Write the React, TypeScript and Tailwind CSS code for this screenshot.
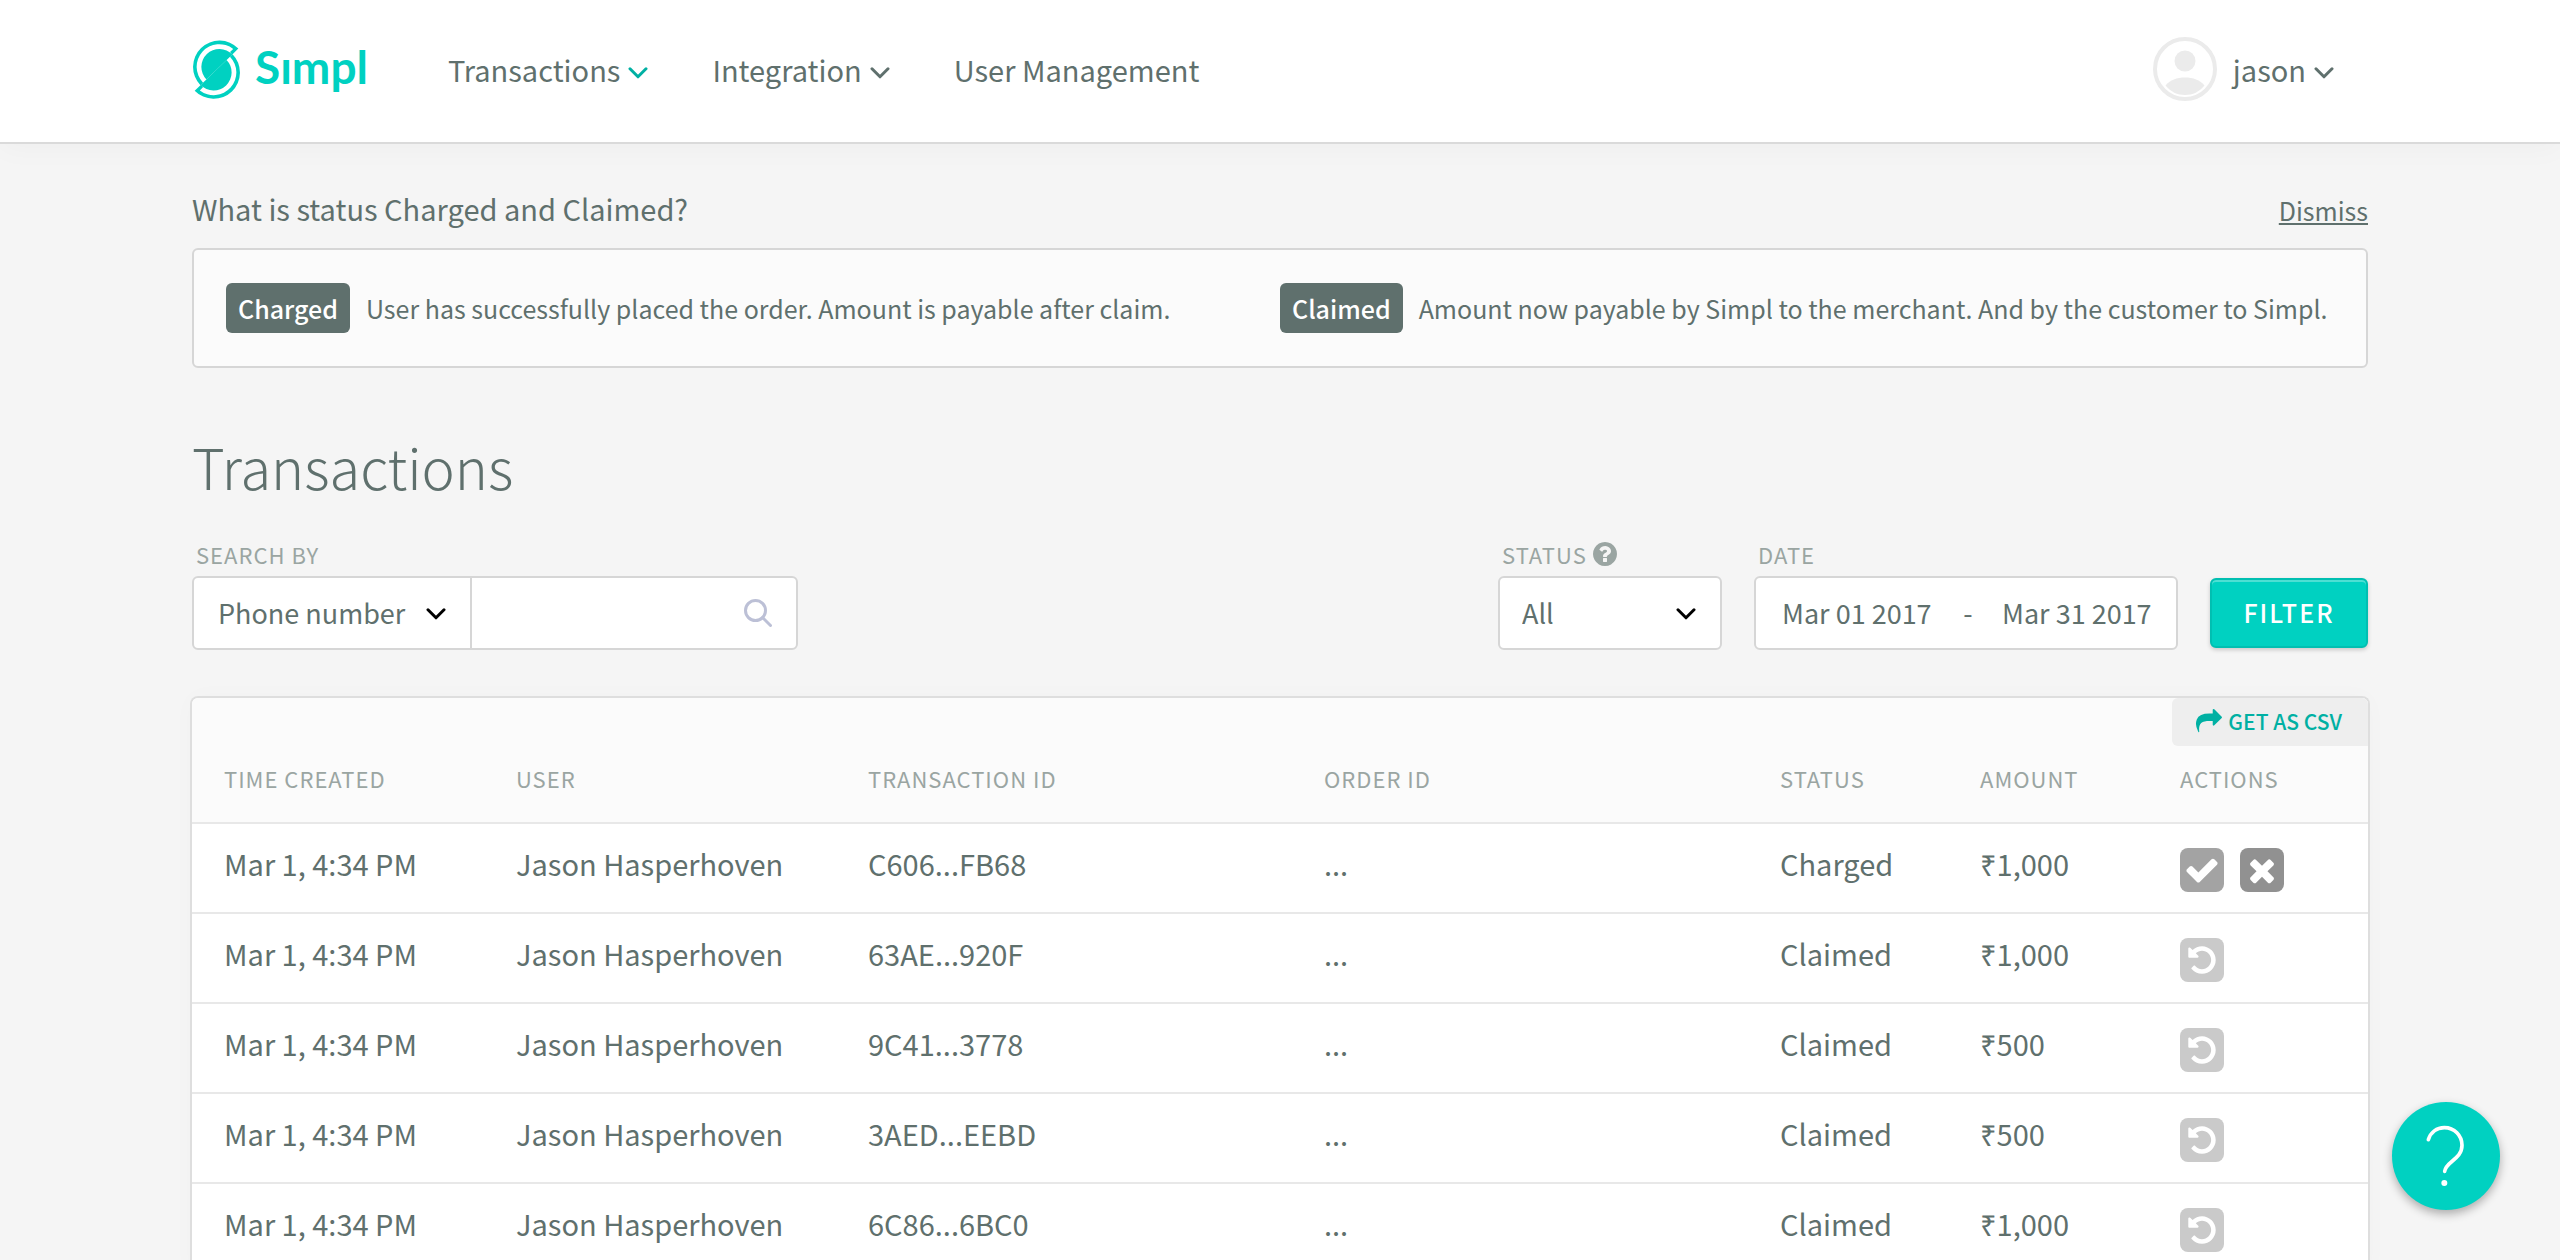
import type { ReactNode } from "react";

const ICONS = {
  check:
    "M1671 566q0 40-28 68l-724 724-136 136q-28 28-68 28t-68-28l-136-136-362-362q-28-28-28-68t28-68l136-136q28-28 68-28t68 28l294 295 656-657q28-28 68-28t68 28l136 136q28 28 28 68z",
  times:
    "M1490 1322q0 40-28 68l-136 136q-28 28-68 28t-68-28l-294-294-294 294q-28 28-68 28t-68-28l-136-136q-28-28-28-68t28-68l294-294-294-294q-28-28-28-68t28-68l136-136q28-28 68-28t68 28l294 294 294-294q28-28 68-28t68 28l136 136q28 28 28 68t-28 68l-294 294 294 294q28 28 28 68z",
  undo: "M1664 896q0 156-61 298t-164 245-245 164-298 61q-172 0-327-72.5t-264-204.5q-7-10-6.5-22.5t8.5-20.5l137-138q10-9 25-9 16 2 23 12 73 95 179 147t225 52q104 0 198.5-40.5t163.5-109.5 109.5-163.5 40.5-198.5-40.5-198.5-109.5-163.5-163.5-109.5-198.5-40.5q-98 0-188 35.5t-160 101.5l137 138q31 30 14 69-17 40-59 40h-448q-26 0-45-19t-19-45v-448q0-42 40-59 39-17 69 14l130 129q107-101 244.5-156.5t284.5-55.5q156 0 298 61t245 164 164 245 61 298z",
  share:
    "M1792 640q0 26-19 45l-512 512q-19 19-45 19t-45-19-19-45v-256h-224q-98 0-175.5 6t-154 21.5-133 42.5-105.5 69.5-80 101-48.5 138.5-17.5 181q0 55 5 123 0 6 2.5 23.5t2.5 26.5q0 15-8.5 25t-23.5 10q-16 0-28-17-7-9-13-22t-13.5-30-10.5-24q-127-285-127-451 0-199 53-333 162-403 875-403h224v-256q0-26 19-45t45-19 45 19l512 512q19 19 19 45z",
  question:
    "M1024 1376v-192q0-14-9-23t-23-9h-192q-14 0-23 9t-9 23v192q0 14 9 23t23 9h192q14 0 23-9t9-23zm256-672q0-88-55.5-163t-138.5-116-170-41q-243 0-371 213-15 24 8 42l132 100q7 6 19 6 16 0 25-12 53-68 86-92 34-24 86-24 48 0 85.5 26t37.5 59q0 38-20 61t-68 45q-63 28-115.5 86.5t-52.5 125.5v36q0 14 9 23t23 9h192q14 0 23-9t9-23q0-19 21.5-49.5t54.5-49.5q32-18 49-28.5t46-35 44.5-48 28-60.5 12.5-81zm384 192q0 209-103 385.5t-279.5 279.5-385.5 103-385.5-103-279.5-279.5-103-385.5 103-385.5 279.5-279.5 385.5-103 385.5 103 279.5 279.5 103 385.5z",
};

function Icon({ name, className }: { name: keyof typeof ICONS; className: string }) {
  return (
    <svg viewBox="0 0 1792 1792" fill="currentColor" aria-hidden="true" className={className}>
      <path d={ICONS[name]} />
    </svg>
  );
}

function Chevron({ className = "" }: { className?: string }) {
  return (
    <svg viewBox="0 0 20 12" aria-hidden="true" className={`h-3 w-5 shrink-0 ${className}`}>
      <path
        d="M2 1.8 L10 9.8 L18 1.8"
        fill="none"
        stroke="currentColor"
        strokeWidth="3"
        strokeLinecap="round"
        strokeLinejoin="round"
      />
    </svg>
  );
}

function LogoMark() {
  const half = "M-42 0 A54 54 0 0 1 66 0 Z M-67 0 A79 79 0 0 1 91 0 H66 V-10 H79.3 A68 68 0 0 0 -56 0 Z";
  return (
    <svg viewBox="38 54 147 183" fill="#00d1c1" aria-hidden="true" className="h-[61px] w-[49px]">
      <g transform="translate(111.5 146) rotate(-44)">
        <path d={half} />
        <path d={half} transform="rotate(180)" />
      </g>
    </svg>
  );
}

function Badge({ children }: { children: ReactNode }) {
  return (
    <span className="rounded-md bg-[#5f706d] px-3 text-[25px] leading-[50px] font-medium text-white">{children}</span>
  );
}

const rows = [
  { id: "C606...FB68", status: "Charged", amount: "₹1,000" },
  { id: "63AE...920F", status: "Claimed", amount: "₹1,000" },
  { id: "9C41...3778", status: "Claimed", amount: "₹500" },
  { id: "3AED...EEBD", status: "Claimed", amount: "₹500" },
  { id: "6C86...6BC0", status: "Claimed", amount: "₹1,000" },
];

const columns = [
  { label: "Time created", width: "w-[292px]" },
  { label: "User", width: "w-[352px]" },
  { label: "Transaction ID", width: "w-[456px]" },
  { label: "Order ID", width: "w-[456px]" },
  { label: "Status", width: "w-[200px]" },
  { label: "Amount", width: "w-[200px]" },
  { label: "Actions", width: "w-[220px]" },
];

function Header() {
  return (
    <header className="relative border-b-2 border-[#dadada] bg-white shadow-[0_4px_28px_rgba(0,0,0,0.03)]">
      <div className="mx-auto flex h-[142px] max-w-[2176px] items-center pb-1 text-[29px] leading-9">
        <a href="#home" aria-label="Simpl" className="flex items-center gap-[14px]">
          <LogoMark />
          <span className="pb-1 font-['Lato',sans-serif] text-[46px] leading-[60px] font-bold text-[#00d1c1]">Sımpl</span>
        </a>
        <nav className="ml-20 flex items-center gap-16">
          <a href="#transactions" className="flex items-center gap-2">
            Transactions
            <Chevron className="mt-2 text-[#00b0a3]" />
          </a>
          <a href="#integration" className="flex items-center gap-2">
            Integration
            <Chevron className="mt-2" />
          </a>
          <a href="#users">User Management</a>
        </nav>
        <button type="button" className="mr-[34px] ml-auto flex items-center gap-4">
          <svg viewBox="0 0 64 64" aria-hidden="true" className="h-16 w-16">
            <circle cx="32" cy="32" r="30" fill="none" stroke="#ebebeb" strokeWidth="4" />
            <circle cx="32" cy="24" r="10.5" fill="#ebebeb" />
            <path d="M12.5 48.5 C17 43 24 40.5 32 40.5 C40 40.5 47 43 51.5 48.5 C46 55 40 58 32 58 C24 58 18 55 12.5 48.5 Z" fill="#ebebeb" />
          </svg>
          <span className="flex items-center gap-2">
            jason
            <Chevron className="mt-2" />
          </span>
        </button>
      </div>
    </header>
  );
}

function Filters() {
  const label = "flex h-8 items-center gap-2 text-[22px] leading-8 tracking-[1px] text-[#9aa5a2] uppercase";
  const box = "flex h-[74px] rounded-md border-2 border-[#d6d6d6] bg-white text-[27px]";
  return (
    <form className="mt-8 flex items-end" onSubmit={(e) => e.preventDefault()}>
      <div>
        <label htmlFor="search-by" className={`${label} mb-1.5 ml-1`}>
          Search by
        </label>
        <div className={box}>
          <div className="grid w-[278px] border-r-2 border-[#d6d6d6]">
            <select id="search-by" className="col-start-1 row-start-1 appearance-none pl-6 outline-none">
              <option>Phone number</option>
            </select>
            <Chevron className="pointer-events-none col-start-1 row-start-1 mt-0.5 mr-6 self-center justify-self-end text-black" />
          </div>
          <div className="flex w-[324px] items-center px-6">
            <input type="text" aria-label="Search" className="min-w-0 flex-1 outline-none" />
            <svg viewBox="0 0 28 28" aria-hidden="true" className="h-7 w-7">
              <g fill="none" stroke="#bcc0d6" strokeWidth="3" strokeLinecap="round">
                <circle cx="11.5" cy="11.5" r="10" />
                <path d="M18.5 18.5 L26.5 26.5" />
              </g>
            </svg>
          </div>
        </div>
      </div>
      <div className="ml-auto">
        <label htmlFor="status" className={`${label} mb-1.5 ml-1`}>
          Status
          <Icon name="question" className="-ml-1 h-7 w-7" />
        </label>
        <div className={box}>
          <div className="grid w-[220px]">
            <select id="status" className="col-start-1 row-start-1 appearance-none pl-[22px] outline-none">
              <option>All</option>
            </select>
            <Chevron className="pointer-events-none col-start-1 row-start-1 mt-0.5 mr-6 self-center justify-self-end text-black" />
          </div>
        </div>
      </div>
      <div className="ml-8">
        <label htmlFor="date-from" className={`${label} mb-1.5 ml-1`}>
          Date
        </label>
        <div className={`${box} w-[424px] items-center justify-between pr-[22px] pl-[26px]`}>
          <input id="date-from" type="text" defaultValue="Mar 01 2017" className="w-[152px] outline-none" />
          <span>-</span>
          <input type="text" aria-label="Date to" defaultValue="Mar 31 2017" className="w-[152px] outline-none" />
        </div>
      </div>
      <button
        type="submit"
        className="mb-0.5 ml-8 h-[70px] w-[158px] rounded-md border-2 border-[#00bfb1] bg-[#00d1c1] pb-0.5 text-[25px] leading-8 font-medium tracking-[2px] text-white uppercase shadow-[inset_0_2px_0_rgba(255,255,255,0.3),0_2px_4px_rgba(0,0,0,0.18)]"
      >
        Filter
      </button>
    </form>
  );
}

function TransactionsTable() {
  return (
    <section className="relative -mx-0.5 mt-[46px] overflow-hidden rounded-t-lg border-2 border-b-0 border-[#dedede] bg-white shadow-[0_0_24px_rgba(0,0,0,0.02)]">
      <button
        type="button"
        className="absolute top-0 right-0 flex h-12 items-center gap-1.5 rounded-l-md bg-[#eeeeee] pr-[26px] pb-0.5 pl-6 text-[21px] leading-8 font-medium text-[#00b0a3] uppercase"
      >
        <Icon name="share" className="h-[26px] w-[26px]" />
        Get as CSV
      </button>
      <table className="w-full table-fixed text-left">
        <thead className="bg-[#fbfbfb] text-[22px] leading-8 text-[#9aa5a2]">
          <tr className="h-[125px] border-b-2 border-[#e8e8e8]">
            {columns.map((c) => (
              <th key={c.label} className={`${c.width} pt-9 pl-8 font-normal tracking-[1px] uppercase`}>
                {c.label}
              </th>
            ))}
          </tr>
        </thead>
        <tbody className="text-[29px] leading-10">
          {rows.map((r) => (
            <tr key={r.id} className="h-[90px] border-b-2 border-[#e8e8e8]">
              <td className="pb-2.5 pl-8">Mar 1, 4:34 PM</td>
              <td className="pb-2.5 pl-8">Jason Hasperhoven</td>
              <td className="pb-2.5 pl-8">{r.id}</td>
              <td className="pb-2.5 pl-8">...</td>
              <td className="pb-2.5 pl-8">{r.status}</td>
              <td className="pb-2.5 pl-8">{r.amount}</td>
              <td className="pt-1 pl-8">
                <div className="flex gap-4 text-white">
                  {r.status === "Charged" ? (
                    <>
                      <button type="button" aria-label="Claim" className="grid h-11 w-11 place-items-center rounded-lg bg-[#a3a3a3]">
                        <Icon name="check" className="h-9 w-9" />
                      </button>
                      <button type="button" aria-label="Cancel" className="grid h-11 w-11 place-items-center rounded-lg bg-[#919191]">
                        <Icon name="times" className="h-9 w-9" />
                      </button>
                    </>
                  ) : (
                    <button type="button" aria-label="Refund" className="grid h-11 w-11 place-items-center rounded-lg bg-[#cacaca]">
                      <Icon name="undo" className="h-8 w-8" />
                    </button>
                  )}
                </div>
              </td>
            </tr>
          ))}
        </tbody>
      </table>
    </section>
  );
}

export default function App() {
  return (
    <div className="h-screen overflow-hidden bg-[#f5f5f5] font-['Noto_Sans_CJK_SC','Noto_Sans',sans-serif] text-[#5f706d]">
      <Header />
      <main className="mx-auto max-w-[2176px] pt-11">
        <div className="mb-4 flex items-start justify-between">
          <h2 className="text-[29px] leading-10">What is status Charged and Claimed?</h2>
          <button type="button" className="text-[25px] leading-[44px] underline decoration-2 underline-offset-2">
            Dismiss
          </button>
        </div>
        <div className="grid h-[120px] grid-cols-2 items-center rounded-md border-2 border-[#d6d6d6] bg-[#fbfbfb] px-8 text-[25px] leading-9">
          <p className="flex items-center gap-4">
            <Badge>Charged</Badge>
            User has successfully placed the order. Amount is payable after claim.
          </p>
          <p className="flex items-center gap-4">
            <Badge>Claimed</Badge>
            Amount now payable by Simpl to the merchant. And by the customer to Simpl.
          </p>
        </div>
        <h1 className="mt-[58px] text-[56px] leading-20 font-light">Transactions</h1>
        <Filters />
        <TransactionsTable />
      </main>
      <button
        type="button"
        aria-label="Help"
        className="fixed right-[60px] bottom-[50px] h-[108px] w-[108px] rounded-full bg-[#00d1c1] shadow-[0_4px_10px_rgba(0,0,0,0.3)]"
      >
        <svg viewBox="756 846 324 324" aria-hidden="true" className="h-full w-full">
          <path
            d="M865 959 C872 937 890 923 913 923 C943 923 966 946 966 976 C966 1018 918 1024 914 1054"
            fill="none"
            stroke="#fff"
            strokeWidth="11"
            strokeLinecap="round"
          />
          <circle cx="913" cy="1089" r="9" fill="#fff" />
        </svg>
      </button>
    </div>
  );
}
